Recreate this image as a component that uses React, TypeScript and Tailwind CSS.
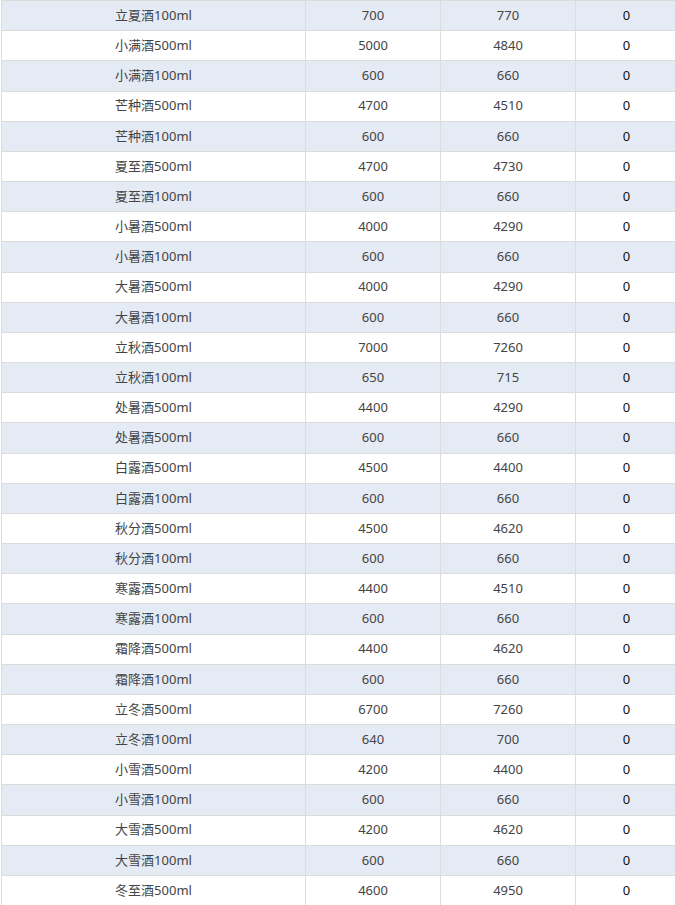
const ROWS: [string, number, number, number][] = [
  ['立夏酒100ml', 700, 770, 0],
  ['小满酒500ml', 5000, 4840, 0],
  ['小满酒100ml', 600, 660, 0],
  ['芒种酒500ml', 4700, 4510, 0],
  ['芒种酒100ml', 600, 660, 0],
  ['夏至酒500ml', 4700, 4730, 0],
  ['夏至酒100ml', 600, 660, 0],
  ['小暑酒500ml', 4000, 4290, 0],
  ['小暑酒100ml', 600, 660, 0],
  ['大暑酒500ml', 4000, 4290, 0],
  ['大暑酒100ml', 600, 660, 0],
  ['立秋酒500ml', 7000, 7260, 0],
  ['立秋酒100ml', 650, 715, 0],
  ['处暑酒500ml', 4400, 4290, 0],
  ['处暑酒500ml', 600, 660, 0],
  ['白露酒500ml', 4500, 4400, 0],
  ['白露酒100ml', 600, 660, 0],
  ['秋分酒500ml', 4500, 4620, 0],
  ['秋分酒100ml', 600, 660, 0],
  ['寒露酒500ml', 4400, 4510, 0],
  ['寒露酒100ml', 600, 660, 0],
  ['霜降酒500ml', 4400, 4620, 0],
  ['霜降酒100ml', 600, 660, 0],
  ['立冬酒500ml', 6700, 7260, 0],
  ['立冬酒100ml', 640, 700, 0],
  ['小雪酒500ml', 4200, 4400, 0],
  ['小雪酒100ml', 600, 660, 0],
  ['大雪酒500ml', 4200, 4620, 0],
  ['大雪酒100ml', 600, 660, 0],
  ['冬至酒500ml', 4600, 4950, 0],
];

export default function App(): JSX.Element {
  return (
    <div
      className="h-[905px] w-[675px] overflow-hidden bg-white text-[13px] text-[#444]"
      style={{ fontFamily: '"Noto Sans", "Noto Sans CJK SC", sans-serif' }}
    >
      <div className="ml-px w-[720px] border-l border-t border-[#dcdcdc]">
        {ROWS.map(([name, cost, price, stock], i) => (
          <div
            key={i}
            className={
              i % 2 === 0
                ? 'flex h-[30.18px] items-center border-b border-[#dcdcdc] bg-[#e5ebf5]'
                : 'flex h-[30.18px] items-center border-b border-[#dcdcdc] bg-white'
            }
          >
            <div className="flex h-full w-[304px] items-center justify-center border-r border-[#dcdcdc]">
              {name}
            </div>
            <div className="flex h-full w-[135px] items-center justify-center border-r border-[#dcdcdc]">
              {cost}
            </div>
            <div className="flex h-full w-[135px] items-center justify-center border-r border-[#dcdcdc]">
              {price}
            </div>
            <div className="flex h-full w-[101px] items-center justify-center text-[#111]">{stock}</div>
          </div>
        ))}
      </div>
    </div>
  );
}
